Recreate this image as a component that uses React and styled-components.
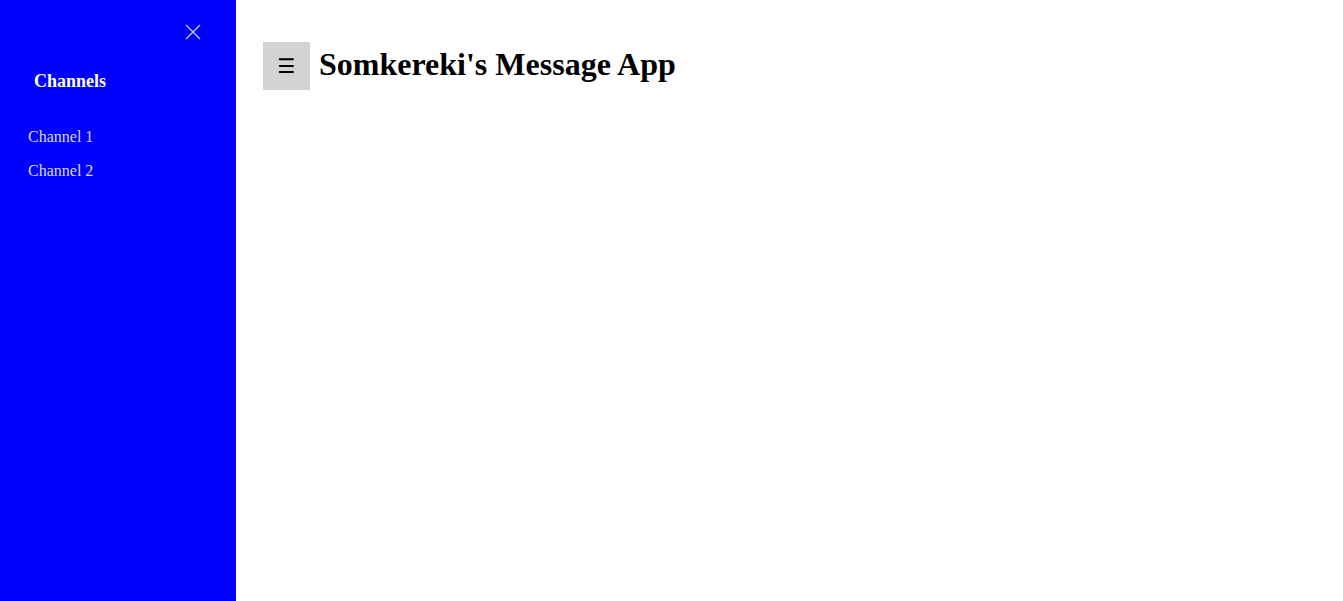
import React from 'react'
import styled, { createGlobalStyle } from 'styled-components'

const Global = createGlobalStyle`
    html, body {
        margin: 0;
        padding: 0;
        background: #fff;
        font-family: "Liberation Serif", "Times New Roman", serif;
    }
`

const Layout = styled.div`
    display: flex;
    min-height: 601px;
`

const Sidebar = styled.nav`
    width: 236px;
    flex-shrink: 0;
    background: #0000ff;
    display: flex;
    flex-direction: column;
    padding-top: 23px;
    box-sizing: border-box;
`

const CloseRow = styled.div`
    display: flex;
    justify-content: flex-end;
    padding-right: 34px;
`

const CloseBtn = styled.button`
    width: 18px;
    height: 18px;
    padding: 0;
    border: none;
    background: transparent;
    cursor: pointer;
    display: grid;
    place-items: center;
`

const Heading = styled.h3`
    margin: 29px 0 0 34px;
    font-size: 18px;
    font-weight: bold;
    color: #fff;
    line-height: 22px;
`

const LinkList = styled.div`
    display: flex;
    flex-direction: column;
    margin-top: 35px;
    gap: 14px;
    padding-left: 28px;
`

const ChannelLink = styled.a`
    color: #d8d8e8;
    font-size: 16px;
    line-height: 20px;
    text-decoration: none;
    cursor: pointer;
`

const Main = styled.main`
    flex: 1;
    padding: 42px 0 0 27px;
`

const Header = styled.div`
    display: flex;
    align-items: center;
    gap: 9px;
`

const MenuBtn = styled.button`
    width: 47px;
    height: 48px;
    border: none;
    background: #d3d3d3;
    font-size: 20px;
    font-family: "DejaVu Sans", sans-serif;
    color: #000;
    padding: 0;
    cursor: pointer;
`

const Title = styled.h1`
    margin: 0 0 4px;
    font-size: 32px;
    font-weight: bold;
    line-height: 44px;
    color: #000;
`

export default function App() {
    const channels = ['Channel 1', 'Channel 2']
    return (
        <>
            <Global />
            <Layout>
                <Sidebar>
                    <CloseRow>
                        <CloseBtn aria-label="close">
                            <svg width="16" height="16" viewBox="0 0 16 16">
                                <path d="M1 1 L15 15 M15 1 L1 15" stroke="#c8c8e0" strokeWidth="1.4" />
                            </svg>
                        </CloseBtn>
                    </CloseRow>
                    <Heading>Channels</Heading>
                    <LinkList>
                        {channels.map(c => <ChannelLink key={c}>{c}</ChannelLink>)}
                    </LinkList>
                </Sidebar>
                <Main>
                    <Header>
                        <MenuBtn>☰</MenuBtn>
                        <Title>Somkereki's Message App</Title>
                    </Header>
                </Main>
            </Layout>
        </>
    )
}
